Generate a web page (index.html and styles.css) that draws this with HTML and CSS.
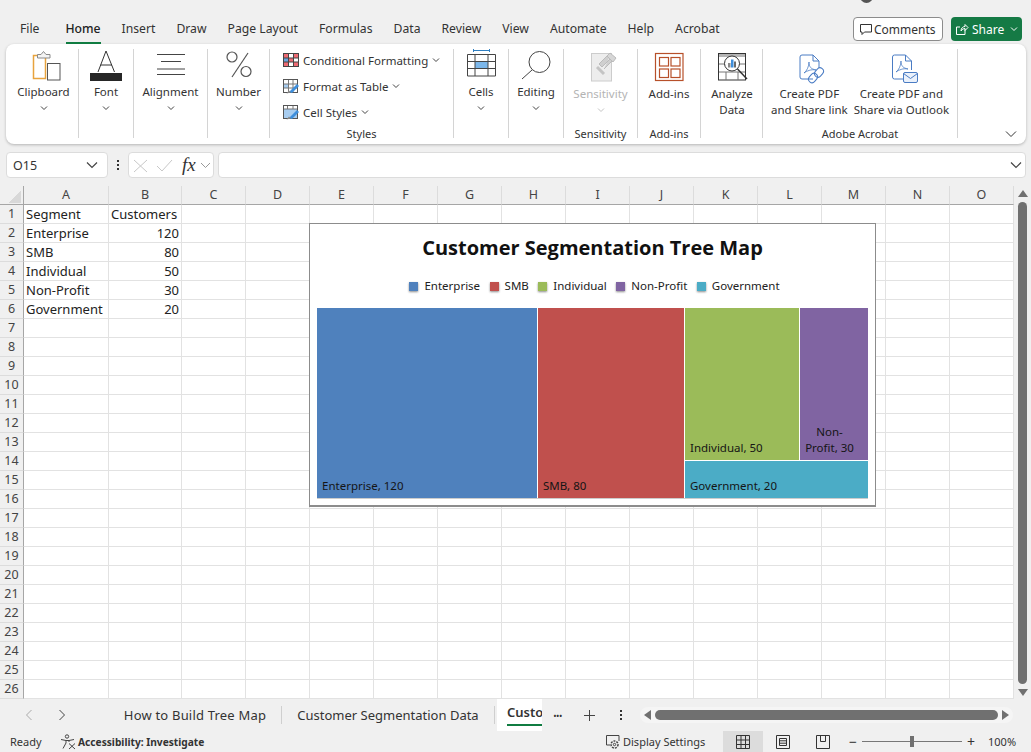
FILE: index.html
```html
<!DOCTYPE html>
<html>
<head>
    <meta charset="utf-8">
    <title>Customer Segmentation Tree Map</title>
    <link rel="stylesheet" href="styles.css">
</head>
<body>
<span class="avatar"></span>
<div class="menubar">
    <div class="menu">
        <span class="file">File</span><span class="current">Home</span><span>Insert</span><span>Draw</span><span>Page Layout</span><span>Formulas</span><span>Data</span><span>Review</span><span>View</span><span>Automate</span><span>Help</span><span>Acrobat</span>
    </div>
    <div class="comments">
        <svg width="14" height="14" viewBox="0 0 14 14" fill="none" stroke="#333"><path d="M1.5 2.5h11v7.5H5.5L3 12.5V10H1.5z"/></svg>
        Comments
    </div>
    <div class="share">
        <svg width="14" height="14" viewBox="0 0 14 14" fill="none" stroke="#fff"><path d="M10 7.5V12.5H1.5V5H5M6 9C6 6 8 4.500 10 4.500V2.500L13 5.500L10 8.500V6.500C8.500 6.500 7 7.500 6 9z"/></svg>
        Share
        <svg class="share-chev" width="8" height="6" viewBox="0 0 8 6" fill="none" stroke="#fff"><path d="M1 1.500L4 4.500L7 1.500"/></svg>
    </div>
</div>

<div class="ribbon">
    <div class="group first">
        <div class="btn">
            <svg class="icon" viewBox="0 0 36 35"><rect x="7.500" y="6.500" width="12" height="23" fill="#fff" stroke="#e8a33d" stroke-width="1.500"/><path d="M11.500 9V5.500H15L17.500 2.500L20 5.500H24V9z" fill="#f4f4f4" stroke="#8a8a8a"/><rect x="21.500" y="14.500" width="12.500" height="16.500" fill="#fff" stroke="#555"/></svg>
            <span class="label">Clipboard</span>
            <svg class="chev" viewBox="0 0 8 16"><path d="M1 6.500L4 9.500L7 6.500"/></svg>
        </div>
    </div>
    <div class="group">
        <div class="btn">
            <svg class="icon" viewBox="0 0 36 35" fill="none" stroke="#333"><path d="M10 23L18 2L26.500 23M12.500 16H24"/><rect x="2" y="24" width="32" height="8" fill="#262626" stroke="none"/></svg>
            <span class="label">Font</span>
            <svg class="chev" viewBox="0 0 8 16"><path d="M1 6.500L4 9.500L7 6.500"/></svg>
        </div>
    </div>
    <div class="group">
        <div class="btn">
            <svg class="icon" viewBox="0 0 36 35" fill="none" stroke="#444"><path d="M4 5.500H32M8 12.500H28M4 20H32M4 25.500H32"/></svg>
            <span class="label">Alignment</span>
            <svg class="chev" viewBox="0 0 8 16"><path d="M1 6.500L4 9.500L7 6.500"/></svg>
        </div>
    </div>
    <div class="group">
        <div class="btn">
            <svg class="icon" viewBox="0 0 36 35" fill="none" stroke="#555" stroke-width="1.200"><circle cx="11" cy="8" r="5"/><circle cx="25" cy="22.500" r="5"/><path d="M27 4L11 28"/></svg>
            <span class="label">Number</span>
            <svg class="chev" viewBox="0 0 8 16"><path d="M1 6.500L4 9.500L7 6.500"/></svg>
        </div>
    </div>
    <div class="group styles">
        <div class="style-rows">
            <div class="style-row">
                <svg width="16" height="15" viewBox="0 0 16 15"><rect x=".5" y=".5" width="15" height="13" fill="#fff" stroke="#444"/><path d="M1 1h5v4H1zM11 1h4v4h-4zM1 9h5v4H1zM11 9h4v4h-4zM6 5h5v4H6z" fill="#ee6b73"/><path d="M6 5H1v4h5z" fill="#6aa5e0"/><path d="M5.500 1v12M10.500 1v12M1 5h14M1 9h14" stroke="#444"/></svg>
                Conditional Formatting
                <svg class="chev-small" viewBox="0 0 8 6"><path d="M1 1.500L4 4.500L7 1.500"/></svg>
            </div>
            <div class="style-row">
                <svg width="16" height="15" viewBox="0 0 16 15"><rect x=".5" y=".5" width="14" height="13" fill="#fff" stroke="#555"/><path d="M1 5h5v4H1z" fill="#a8cdf0"/><path d="M5.500 1v12M10 1v12M1 5h13M1 9h13" stroke="#777"/><path d="M6 13L14 5L16 7L9 14z" fill="#3f8fdc"/><path d="M3.500 14.500L6 11.500L8 13.500z" fill="#888"/></svg>
                Format as Table
                <svg class="chev-small" viewBox="0 0 8 6"><path d="M1 1.500L4 4.500L7 1.500"/></svg>
            </div>
            <div class="style-row">
                <svg width="16" height="15" viewBox="0 0 16 15"><rect x=".5" y=".5" width="14" height="13" fill="#a8cdf0" stroke="#555"/><path d="M1 1h13v3H1z" fill="#fff"/><path d="M4.500 1v3M10 1v3M1 4h13" stroke="#777"/><path d="M6 13L14 5L16 7L9 14z" fill="#3f8fdc"/><path d="M3.500 14.500L6 11.500L8 13.500z" fill="#888"/></svg>
                Cell Styles
                <svg class="chev-small" viewBox="0 0 8 6"><path d="M1 1.500L4 4.500L7 1.500"/></svg>
            </div>
        </div>
        <div class="group-label">Styles</div>
    </div>
    <div class="group">
        <div class="btn">
            <svg class="icon" viewBox="0 0 36 35" fill="none"><path d="M10.500 1.500H26.500M10.500 0V3M26.500 0V3" stroke="#2f7fc1"/><rect x="12" y="12.500" width="13" height="7" fill="#7cb7ea"/><path d="M4.500 5.500H32.500V27H4.500zM4.500 12.500H32.500M4.500 19.500H32.500M12 5.500V27M25 5.500V27" stroke="#444"/></svg>
            <span class="label">Cells</span>
            <svg class="chev" viewBox="0 0 8 16"><path d="M1 6.500L4 9.500L7 6.500"/></svg>
        </div>
    </div>
    <div class="group">
        <div class="btn">
            <svg class="icon" viewBox="0 0 36 35" fill="none" stroke="#444"><circle cx="21.500" cy="13" r="10.500"/><path d="M14 21L4 30"/></svg>
            <span class="label">Editing</span>
            <svg class="chev" viewBox="0 0 8 16"><path d="M1 6.500L4 9.500L7 6.500"/></svg>
        </div>
    </div>
    <div class="group">
        <div class="btn tall muted">
            <svg class="icon" viewBox="0 0 36 37"><rect x="8.500" y="4.500" width="20" height="27.500" fill="#ededed" stroke="#ccc"/><path d="M16 15L24 7L27 10L19 18z M21 20L29 12L26 9" fill="#cfcfcf" stroke="#bbb"/><path d="M27 4L33 9L30 13L24 7z" fill="#d6d6d6" stroke="#bbb"/><path d="M14 18L21 25" stroke="#c4c4c4" stroke-width="3"/></svg>
            <span class="label">Sensitivity</span>
            <svg class="chev" viewBox="0 0 8 16"><path d="M1 6.500L4 9.500L7 6.500"/></svg>
        </div>
        <div class="group-label">Sensitivity</div>
    </div>
    <div class="group">
        <div class="btn tall">
            <svg class="icon" viewBox="0 0 36 37" fill="none" stroke="#b7502a" stroke-width="1.200"><rect x="4.500" y="4.500" width="27.500" height="27"/><rect x="8.500" y="8.500" width="9" height="8.500"/><rect x="20" y="8.500" width="9" height="8.500"/><rect x="8.500" y="20" width="9" height="8.500"/><rect x="20" y="20" width="9" height="8.500"/></svg>
            <span class="label">Add-ins</span>
        </div>
        <div class="group-label">Add-ins</div>
    </div>
    <div class="group">
        <div class="btn tall">
            <svg class="icon" viewBox="0 0 36 37"><rect x="4.500" y="4.500" width="27" height="26.500" fill="#fff" stroke="#333"/><rect x="5" y="5" width="26" height="3" fill="#b5b5b5"/><path d="M5 15H31M5 23H31M12 23V31M24 23V31" stroke="#777"/><circle cx="18" cy="14.500" r="7.500" fill="#fff" stroke="#333"/><rect x="14" y="14" width="2.500" height="4.500" fill="#8a8a8a"/><rect x="17" y="10.500" width="2.500" height="8" fill="#3f8fdc"/><rect x="20" y="12.500" width="2" height="6" fill="#6a6a6a"/><path d="M23.500 20L33 30" stroke="#333" stroke-width="1.500"/></svg>
            <span class="label">Analyze<br>Data</span>
        </div>
    </div>
    <div class="group acrobat">
        <div class="pdf-btns">
            <div class="btn tall">
                <svg class="icon" viewBox="0 0 36 37" fill="none" stroke="#4a7cc4"><path d="M22 30H11a2 2 0 0 1-2-2V8a2 2 0 0 1 2-2H22L28 12V19M22 6V12H28"/><path d="M13 24C16 22 18 17 18 13C18 18 20 20 25 21C20 20 16 22 13 24z" stroke-width=".8"/><rect x="24.500" y="18.500" width="7" height="10" rx="3.500" transform="rotate(40 28 23.500)"/><rect x="18.500" y="24" width="7" height="10" rx="3.500" transform="rotate(40 22 29)"/></svg>
                <span class="label">Create PDF<br>and Share link</span>
            </div>
            <div class="btn tall">
                <svg class="icon" viewBox="0 0 36 37" fill="none" stroke="#4a7cc4"><path d="M20 30H11.500a2 2 0 0 1-2-2V8a2 2 0 0 1 2-2H22.500L28.500 12V21M22.500 6V12H28.500"/><path d="M13 23C16 21 18 16 18 12C18 17 20 19 25 20C20 19 16 21 13 23z" stroke-width=".8"/><rect x="20.500" y="23.500" width="14" height="10" rx="1.500" fill="#eaf1fb"/><path d="M20.500 24.500L27.500 29.500L34.500 24.500"/></svg>
                <span class="label">Create PDF and<br>Share via Outlook</span>
            </div>
        </div>
        <div class="group-label">Adobe Acrobat</div>
    </div>
    <div class="collapse">
        <svg width="12" height="8" viewBox="0 0 12 8" fill="none" stroke="#333"><path d="M1 1.500L6 6.500L11 1.500"/></svg>
    </div>
</div>

<div class="formula-row">
    <div class="namebox">O15
        <svg width="12" height="8" viewBox="0 0 12 8" fill="none" stroke="#444" stroke-width="1.200"><path d="M1 1.500L6 6.500L11 1.500"/></svg>
    </div>
    <div class="dots-v"><i></i><i></i><i></i></div>
    <div class="fxbox">
        <svg width="17" height="15" viewBox="0 0 17 15" fill="none" stroke="#c8c8c8"><path d="M2 2L15 14M15 2L2 14"/></svg>
        <svg width="18" height="15" viewBox="0 0 18 15" fill="none" stroke="#c8c8c8"><path d="M2 8L7 13L17 2"/></svg>
        <span class="fx">fx</span>
        <svg width="11" height="7" viewBox="0 0 11 7" fill="none" stroke="#999"><path d="M1 1L5.500 5.500L10 1"/></svg>
    </div>
    <div class="formula-input">
        <svg width="12" height="8" viewBox="0 0 12 8" fill="none" stroke="#444" stroke-width="1.200"><path d="M1 1.500L6 6.500L11 1.500"/></svg>
    </div>
</div>

<div class="sheet">
    <table class="grid">
        <colgroup><col class="c-head"><col class="c-a"><col class="c-b"><col span="13" class="c-std"></colgroup>
        <tr><th class="corner"></th><th>A</th><th>B</th><th>C</th><th>D</th><th>E</th><th>F</th><th>G</th><th>H</th><th>I</th><th>J</th><th>K</th><th>L</th><th>M</th><th>N</th><th>O</th></tr>
        <tr><th>1</th><td>Segment</td><td>Customers</td><td></td><td></td><td></td><td></td><td></td><td></td><td></td><td></td><td></td><td></td><td></td><td></td><td></td></tr>
        <tr><th>2</th><td>Enterprise</td><td class="num">120</td><td></td><td></td><td></td><td></td><td></td><td></td><td></td><td></td><td></td><td></td><td></td><td></td><td></td></tr>
        <tr><th>3</th><td>SMB</td><td class="num">80</td><td></td><td></td><td></td><td></td><td></td><td></td><td></td><td></td><td></td><td></td><td></td><td></td><td></td></tr>
        <tr><th>4</th><td>Individual</td><td class="num">50</td><td></td><td></td><td></td><td></td><td></td><td></td><td></td><td></td><td></td><td></td><td></td><td></td><td></td></tr>
        <tr><th>5</th><td>Non-Profit</td><td class="num">30</td><td></td><td></td><td></td><td></td><td></td><td></td><td></td><td></td><td></td><td></td><td></td><td></td><td></td></tr>
        <tr><th>6</th><td>Government</td><td class="num">20</td><td></td><td></td><td></td><td></td><td></td><td></td><td></td><td></td><td></td><td></td><td></td><td></td><td></td></tr>
        <tr><th>7</th><td></td><td></td><td></td><td></td><td></td><td></td><td></td><td></td><td></td><td></td><td></td><td></td><td></td><td></td><td></td></tr>
        <tr><th>8</th><td></td><td></td><td></td><td></td><td></td><td></td><td></td><td></td><td></td><td></td><td></td><td></td><td></td><td></td><td></td></tr>
        <tr><th>9</th><td></td><td></td><td></td><td></td><td></td><td></td><td></td><td></td><td></td><td></td><td></td><td></td><td></td><td></td><td></td></tr>
        <tr><th>10</th><td></td><td></td><td></td><td></td><td></td><td></td><td></td><td></td><td></td><td></td><td></td><td></td><td></td><td></td><td></td></tr>
        <tr><th>11</th><td></td><td></td><td></td><td></td><td></td><td></td><td></td><td></td><td></td><td></td><td></td><td></td><td></td><td></td><td></td></tr>
        <tr><th>12</th><td></td><td></td><td></td><td></td><td></td><td></td><td></td><td></td><td></td><td></td><td></td><td></td><td></td><td></td><td></td></tr>
        <tr><th>13</th><td></td><td></td><td></td><td></td><td></td><td></td><td></td><td></td><td></td><td></td><td></td><td></td><td></td><td></td><td></td></tr>
        <tr><th>14</th><td></td><td></td><td></td><td></td><td></td><td></td><td></td><td></td><td></td><td></td><td></td><td></td><td></td><td></td><td></td></tr>
        <tr><th>15</th><td></td><td></td><td></td><td></td><td></td><td></td><td></td><td></td><td></td><td></td><td></td><td></td><td></td><td></td><td></td></tr>
        <tr><th>16</th><td></td><td></td><td></td><td></td><td></td><td></td><td></td><td></td><td></td><td></td><td></td><td></td><td></td><td></td><td></td></tr>
        <tr><th>17</th><td></td><td></td><td></td><td></td><td></td><td></td><td></td><td></td><td></td><td></td><td></td><td></td><td></td><td></td><td></td></tr>
        <tr><th>18</th><td></td><td></td><td></td><td></td><td></td><td></td><td></td><td></td><td></td><td></td><td></td><td></td><td></td><td></td><td></td></tr>
        <tr><th>19</th><td></td><td></td><td></td><td></td><td></td><td></td><td></td><td></td><td></td><td></td><td></td><td></td><td></td><td></td><td></td></tr>
        <tr><th>20</th><td></td><td></td><td></td><td></td><td></td><td></td><td></td><td></td><td></td><td></td><td></td><td></td><td></td><td></td><td></td></tr>
        <tr><th>21</th><td></td><td></td><td></td><td></td><td></td><td></td><td></td><td></td><td></td><td></td><td></td><td></td><td></td><td></td><td></td></tr>
        <tr><th>22</th><td></td><td></td><td></td><td></td><td></td><td></td><td></td><td></td><td></td><td></td><td></td><td></td><td></td><td></td><td></td></tr>
        <tr><th>23</th><td></td><td></td><td></td><td></td><td></td><td></td><td></td><td></td><td></td><td></td><td></td><td></td><td></td><td></td><td></td></tr>
        <tr><th>24</th><td></td><td></td><td></td><td></td><td></td><td></td><td></td><td></td><td></td><td></td><td></td><td></td><td></td><td></td><td></td></tr>
        <tr><th>25</th><td></td><td></td><td></td><td></td><td></td><td></td><td></td><td></td><td></td><td></td><td></td><td></td><td></td><td></td><td></td></tr>
        <tr><th>26</th><td></td><td></td><td></td><td></td><td></td><td></td><td></td><td></td><td></td><td></td><td></td><td></td><td></td><td></td><td></td></tr>
    </table>

    <div class="vscroll">
        <span class="arrow-up"></span>
        <span class="vthumb"></span>
        <span class="arrow-down"></span>
    </div>

    <div class="chart">
        <div class="chart-title">Customer Segmentation Tree Map</div>
        <div class="legend">
            <span class="key"><i class="blue"></i>Enterprise</span>
            <span class="key"><i class="red"></i>SMB</span>
            <span class="key"><i class="green"></i>Individual</span>
            <span class="key"><i class="purple"></i>Non-Profit</span>
            <span class="key"><i class="teal"></i>Government</span>
        </div>
        <div class="treemap">
            <div class="tile blue w-ent">Enterprise, 120</div>
            <div class="tile red w-smb">SMB, 80</div>
            <div class="tm-col">
                <div class="tm-row">
                    <div class="tile green w-ind">Individual, 50</div>
                    <div class="tile purple w-non">Non-Profit, 30</div>
                </div>
                <div class="tile teal h-gov">Government, 20</div>
            </div>
        </div>
    </div>
</div>

<div class="tabbar">
    <div class="tab-nav">
        <svg width="10" height="12" viewBox="0 0 10 12" fill="none" stroke="#aaa"><path d="M7.500 1L2.500 6L7.500 11"/></svg>
        <svg width="10" height="12" viewBox="0 0 10 12" fill="none" stroke="#444"><path d="M2.500 1L7.500 6L2.500 11"/></svg>
    </div>
    <div class="tab t1">How to Build Tree Map</div>
    <span class="tab-sep"></span>
    <div class="tab t2">Customer Segmentation Data</div>
    <span class="tab-sep"></span>
    <div class="tab-active"><span>Custo</span></div>
    <div class="tab-more">•••</div>
    <div class="tab-add">
        <svg width="13" height="13" viewBox="0 0 13 13" stroke="#444"><path d="M6.500 1V12M1 6.500H12"/></svg>
    </div>
    <div class="tab-vdots dots-v"><i></i><i></i><i></i></div>
    <div class="hscroll">
        <span class="arrow-left"></span>
        <span class="hthumb"></span>
        <span class="arrow-right"></span>
    </div>
</div>

<div class="statusbar">
    <span class="ready">Ready</span>
    <svg class="acc-icon" width="16" height="16" viewBox="0 0 16 16" fill="none" stroke="#444"><circle cx="7" cy="2.500" r="1.700"/><path d="M1 5.500L6 6.500H9L14 5.500M6 6.500V9L3 14.500M9 6.500V8M9 9.500L15 15M15 9.500L9 15"/></svg>
    <span class="acc">Accessibility: Investigate</span>
    <svg class="disp-icon" width="15" height="15" viewBox="0 0 15 15" fill="none" stroke="#444"><path d="M5 11H1.500V1.500H14V7"/><circle cx="9.500" cy="10.500" r="3.500" stroke-dasharray="2 1" stroke-width="1.500"/><circle cx="9.500" cy="10.500" r="1.200"/></svg>
    <span class="disp">Display Settings</span>
    <div class="view on"><svg width="14" height="14" viewBox="0 0 14 14" fill="none" stroke="#333"><path d="M.5 .5H13.500V13.500H.5zM.5 5H13.500M.5 9.500H13.500M5 .5V13.500M9.500 .5V13.500"/></svg></div>
    <div class="view"><svg width="14" height="14" viewBox="0 0 14 14" fill="none" stroke="#333"><path d="M.5 .5H13.500V13.500H.5zM3.500 3.500H10.500V10.500H3.500zM3.500 5.800H10.500M3.500 8.200H10.500"/></svg></div>
    <div class="view"><svg width="14" height="14" viewBox="0 0 14 14" fill="none" stroke="#333"><path d="M.5 .5H13.500V13.500H.5zM4.500 .5V6.500H9.500V.5"/></svg></div>
    <div class="zoomer">
        <span class="zm">−</span>
        <span class="slider"><i></i></span>
        <span class="zm">+</span>
    </div>
    <span class="pct">100%</span>
</div>
</body>
</html>
```

FILE: styles.css
```css
body{
	margin: 0;
	height: 752px;
	overflow: hidden;
	background-color: #f0f0f0;
	font-family: "Noto Sans", "Open Sans", sans-serif;
	font-size: 11.5px;
	color: #333;
	position: relative;
}
svg{
	display: block;
	flex: none;
}
.avatar{
	position: absolute;
	left: 860px;
	top: -10px;
	width: 13px;
	height: 13px;
	border-radius: 50%;
	background-color: #555;
}

/* top menu */
.menubar{
	display: flex;
	align-items: center;
	height: 44px;
	padding: 14px 9px 0 20px;
	box-sizing: border-box;
}
.menu{
	display: flex;
	gap: 21px;
	flex: 1;
	font-size: 12.2px;
	line-height: 18px;
}
.menu span{
	padding-bottom: 4px;
	border-bottom: 2px solid transparent;
	margin-top: 6px;
}
.menu .file{
	margin-right: 5px;
}
.menu .current{
	color: #222;
	font-weight: 500;
	border-bottom-color: #107c41;
}
.comments{
	display: flex;
	align-items: center;
	gap: 1px;
	width: 90px;
	height: 24px;
	box-sizing: border-box;
	padding-left: 5px;
	margin-right: 8px;
	background-color: #fff;
	border: 1px solid #8c8c8c;
	border-radius: 4px;
	font-size: 12px;
}
.share{
	display: flex;
	align-items: center;
	gap: 3px;
	width: 71px;
	height: 24px;
	box-sizing: border-box;
	padding-left: 4px;
	background-color: #157a45;
	border-radius: 4px;
	color: #fff;
	font-size: 12px;
}
.share-chev{
	margin-left: 3px;
}

/* ribbon */
.ribbon{
	display: flex;
	height: 100px;
	box-sizing: border-box;
	margin: 0 5px 0 6px;
	padding: 5px 0 6px;
	background-color: #fff;
	border-radius: 8px;
	box-shadow: 0 1px 3px rgba(0,0,0,.25);
}
.group{
	display: flex;
	flex-direction: column;
	width: 55px;
	box-sizing: border-box;
	border-right: 1px solid #d4d4d4;
}
.group.first{ width: 73px; padding-left: 3px; }
.group:nth-child(3){ width: 74px; }
.group:nth-child(4){ width: 62px; }
.group.styles{ width: 184px; }
.group:nth-child(8){ width: 74px; }
.group:nth-child(9){ width: 63px; }
.group:nth-child(10){ width: 62px; padding-left: 1px; }
.group.acrobat{ width: 195px; }
.btn{
	display: flex;
	flex-direction: column;
	align-items: center;
	flex: 1;
	text-align: center;
}
.icon{
	width: 36px;
	height: 35px;
}
.btn.tall .icon{ height: 37px; }
.label{
	line-height: 16px;
	font-size: 11.5px;
	white-space: nowrap;
}
.chev{
	width: 8px;
	height: 16px;
	fill: none;
	stroke: #444;
}
.muted{ color: #b4b4b4; }
.muted .chev{ stroke: #c4c4c4; }
.group-label{
	height: 16px;
	margin-bottom: -4px;
	line-height: 16px;
	text-align: center;
	font-size: 11px;
	white-space: nowrap;
}
.style-rows{
	flex: 1;
	padding-left: 13px;
	margin-top: -2px;
}
.style-row{
	display: flex;
	align-items: center;
	height: 26px;
	gap: 4px;
	white-space: nowrap;
}
.chev-small{
	width: 8px;
	height: 6px;
	fill: none;
	stroke: #444;
}
.pdf-btns{
	display: flex;
	justify-content: center;
	flex: 1;
	gap: 6px;
}
.pdf-btns .btn{ flex: none; }
.collapse{
	flex: 1;
	display: flex;
	justify-content: flex-end;
	align-items: flex-end;
	padding: 0 9px 0 0;
}

/* formula bar */
.formula-row{
	display: flex;
	height: 26px;
	margin: 8px 5px 8px 6px;
}
.namebox, .fxbox, .formula-input{
	display: flex;
	align-items: center;
	box-sizing: border-box;
	background-color: #fff;
	border: 1px solid #dcdcdc;
	border-radius: 4px;
}
.namebox{
	width: 102px;
	padding: 0 9px 0 6px;
	justify-content: space-between;
	font-size: 12.5px;
}
.dots-v{
	display: flex;
	flex-direction: column;
	justify-content: center;
	align-items: center;
	gap: 2px;
	width: 20px;
}
.dots-v i{
	width: 2px;
	height: 2px;
	background-color: #333;
}
.fxbox{
	width: 86px;
	padding-left: 3px;
	gap: 6px;
}
.fx{
	font-family: "Liberation Serif", serif;
	font-style: italic;
	font-size: 19px;
	line-height: 20px;
	color: #333;
	margin-left: 3px;
	margin-right: -2px;
}
.formula-input{
	flex: 1;
	margin-left: 4px;
	padding-right: 3px;
	justify-content: flex-end;
}

/* sheet */
.sheet{
	display: flex;
	position: relative;
	height: 513px;
	background-color: #fff;
}
.grid{
	table-layout: fixed;
	width: 1014px;
	height: 513px;
	border-collapse: separate;
	border-spacing: 0;
	font-size: 13px;
}
.c-head{ width: 24px; }
.c-a{ width: 85px; }
.c-b{ width: 73px; }
.c-std{ width: 64px; }
.grid tr{ height: 19px; }
.grid th, .grid td{
	height: 19px;
	box-sizing: border-box;
	padding: 0 2px;
	line-height: 18px;
	overflow: hidden;
	white-space: nowrap;
}
.grid td{
	border-right: 1px solid #e2e2e2;
	border-bottom: 1px solid #e2e2e2;
	color: #222;
}
.grid th{
	background-color: #f0f0f0;
	font-weight: normal;
	font-size: 12.5px;
	color: #444;
	border-right: 1px solid #dcdcdc;
	border-bottom: 1px solid #dcdcdc;
	text-align: center;
}
.grid tr:first-child th{
	border-bottom-color: #a6a6a6;
}
.grid tr th:first-child{
	border-right-color: #a6a6a6;
}
.grid th.corner{
	background-image: linear-gradient(135deg, transparent 50%, #d8d8d8 50%);
	background-size: 13px 13px;
	background-position: 8px 4px;
	background-repeat: no-repeat;
}
.grid .num{ text-align: right; }
.vscroll{
	display: flex;
	flex-direction: column;
	align-items: center;
	width: 17px;
	background-color: #f0f0f0;
}
.arrow-up{
	margin-top: 4px;
	border: 5px solid transparent;
	border-top: 0;
	border-bottom: 7px solid #707070;
}
.vthumb{
	flex: 1;
	width: 9px;
	margin: 5px 0 5px;
	background-color: #707070;
	border-radius: 5px;
}
.arrow-down{
	margin-bottom: 3px;
	border: 5px solid transparent;
	border-bottom: 0;
	border-top: 7px solid #707070;
}

/* chart sits over the cells */
.chart{
	position: absolute;
	left: 309px;
	top: 37px;
	width: 567px;
	height: 284px;
	box-sizing: border-box;
	padding: 9px 7px 0 7px;
	background-color: #fff;
	border: 1px solid #8c8c8c;
	border-bottom-width: 2px;
}
.chart-title{
	height: 30px;
	line-height: 30px;
	text-align: center;
	font-family: "Open Sans", sans-serif;
	font-size: 20px;
	font-weight: 700;
	color: #111;
}
.legend{
	display: flex;
	justify-content: center;
	gap: 9.5px;
	height: 16px;
	margin: 15px 0 14px;
	padding-left: 4px;
	line-height: 16px;
	font-size: 11.5px;
	color: #222;
}
.key{
	display: flex;
	align-items: center;
	gap: 6px;
}
.key i{
	width: 9px;
	height: 9px;
	box-shadow: 0 1px 2px rgba(0,0,0,.45);
}
.treemap{
	display: flex;
	gap: 1px;
	height: 191px;
	width: 551px;
	border-bottom: 1px solid #ccc;
	box-sizing: border-box;
}
.tm-col{
	display: flex;
	flex-direction: column;
	gap: 1px;
	width: 183px;
}
.tm-row{
	display: flex;
	gap: 1px;
	flex: 1;
}
.tile{
	display: flex;
	flex-direction: column;
	justify-content: flex-end;
	box-sizing: border-box;
	padding: 0 5px 4px;
	line-height: 16px;
	font-size: 11.5px;
	color: #151515;
}
.w-ent{ width: 220px; }
.w-smb{ width: 146px; }
.w-ind{ width: 114px; }
.w-non{ width: 68px; padding: 0 9px 4px 0; text-align: center; }
.h-gov{ height: 37px; }
.blue{ background-color: #4f81bd; }
.red{ background-color: #c0504d; }
.green{ background-color: #9bbb59; }
.purple{ background-color: #8064a2; }
.teal{ background-color: #4bacc6; }

/* sheet tabs */
.tabbar{
	display: flex;
	align-items: center;
	height: 32px;
	font-size: 13px;
}
.tab-nav{
	display: flex;
	gap: 23px;
	width: 85px;
	padding-left: 24px;
}
.tab{
	text-align: center;
	white-space: nowrap;
	color: #333;
}
.t1{ width: 172px; letter-spacing: .2px; }
.t2{ width: 212px; }
.tab-sep{
	width: 1px;
	height: 18px;
	background-color: #cfcfcf;
}
.tab-active{
	align-self: stretch;
	width: 45px;
	margin-left: 2px;
	padding-left: 10px;
	box-sizing: border-box;
	background-color: #fff;
	overflow: hidden;
	font-weight: 600;
	line-height: 27px;
}
.tab-active span{
	display: block;
	height: 25px;
	border-bottom: 2px solid #107c41;
	white-space: nowrap;
}
.tab-more{
	width: 31px;
	text-align: center;
	font-size: 9px;
	letter-spacing: -.5px;
}
.tab-add{
	display: flex;
	justify-content: center;
	width: 32px;
}
.tab-vdots{
	width: 32px;
}
.hscroll{
	display: flex;
	align-items: center;
	width: 373px;
	height: 16px;
	margin-left: 3px;
	box-sizing: border-box;
	padding: 0 4px;
	background-color: #f5f5f5;
	border-radius: 8px;
}
.arrow-left{
	border: 5px solid transparent;
	border-left: 0;
	border-right: 7px solid #707070;
}
.hthumb{
	flex: 1;
	height: 10px;
	margin: 0 4px;
	background-color: #707070;
	border-radius: 5px;
}
.arrow-right{
	border: 5px solid transparent;
	border-right: 0;
	border-left: 7px solid #707070;
}

/* status bar */
.statusbar{
	display: flex;
	align-items: center;
	height: 21px;
	font-size: 11px;
	color: #333;
	white-space: nowrap;
}
.ready{
	width: 50px;
	padding-left: 10px;
	box-sizing: border-box;
}
.acc-icon{ margin: 0 2px 0 10px; }
.acc{
	width: 527px;
	font-weight: 700;
	font-size: 10.2px;
}
.disp-icon{ margin-right: 3px; }
.disp{
	width: 100px;
}
.view{
	display: flex;
	justify-content: center;
	align-items: center;
	width: 40px;
	height: 21px;
}
.view.on{ background-color: #dcdcdc; }
.zoomer{
	display: flex;
	align-items: center;
	gap: 5px;
	margin-left: 6px;
	font-size: 14px;
}
.zm{
	width: 8px;
	text-align: center;
}
.slider{
	display: block;
	position: relative;
	flex: none;
	width: 100px;
	height: 1px;
	background-color: #777;
}
.slider i{
	position: absolute;
	left: 48px;
	top: -5px;
	width: 4px;
	height: 11px;
	background-color: #707070;
}
.pct{
	margin-left: 13px;
}
```
